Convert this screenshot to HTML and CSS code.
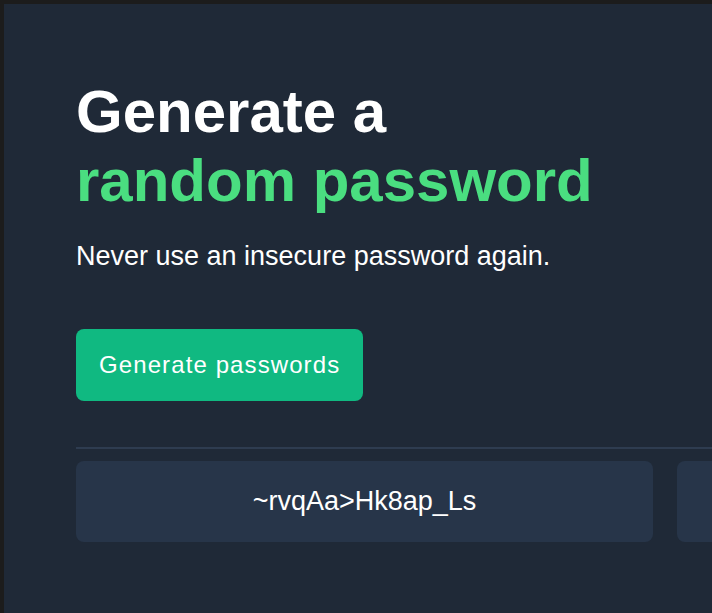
FILE: index.html
```html
<!DOCTYPE html>
<html lang="en">
<head>
<meta charset="utf-8">
<title>Password Generator</title>
<link rel="stylesheet" href="styles.css">
</head>
<body>
<main class="page">
  <h1 class="title">Generate a<br><span class="accent">random password</span></h1>
  <p class="subtitle">Never use an insecure password again.</p>
  <button class="btn" type="button">Generate passwords</button>
  <hr class="divider">
  <div class="results">
    <div class="result">~rvqAa&gt;Hk8ap_Ls</div>
    <div class="result">&nbsp;</div>
  </div>
</main>
</body>
</html>
```
FILE: styles.css
```css
html, body {
  margin: 0;
  height: 100%;
}
body {
  background: #1c1c1c;
  padding: 4px 0 0 4px;
  box-sizing: border-box;
  overflow: hidden;
  font-family: "Liberation Sans", Arial, sans-serif;
}
.page {
  background: #1f2937;
  min-height: 100%;
  width: 1000px;
  box-sizing: border-box;
  padding: 73px 0 40px 72px;
}
.title {
  margin: 0;
  font-size: 60px;
  line-height: 69px;
  font-weight: 700;
  color: #ffffff;
}
.accent {
  color: #4ade80;
}
.subtitle {
  margin: 26px 0 0;
  font-size: 27px;
  line-height: 31px;
  color: #ffffff;
}
.btn {
  display: block;
  margin-top: 57px;
  background: #10b981;
  color: #ffffff;
  border: none;
  border-radius: 8px;
  padding: 21px 23px 21px 23px;
  font-family: "Liberation Sans", Arial, sans-serif;
  font-size: 24px;
  line-height: 30px;
  letter-spacing: 1.1px;
}
.divider {
  margin: 46px 0 0;
  border: none;
  height: 2px;
  background: #2e3c50;
}
.results {
  display: flex;
  gap: 24px;
  margin-top: 12px;
}
.result {
  flex: 0 0 577px;
  box-sizing: border-box;
  background: #273549;
  border-radius: 8px;
  padding: 25px 0;
  text-align: center;
  font-size: 27px;
  line-height: 31px;
  color: #ffffff;
}
```
